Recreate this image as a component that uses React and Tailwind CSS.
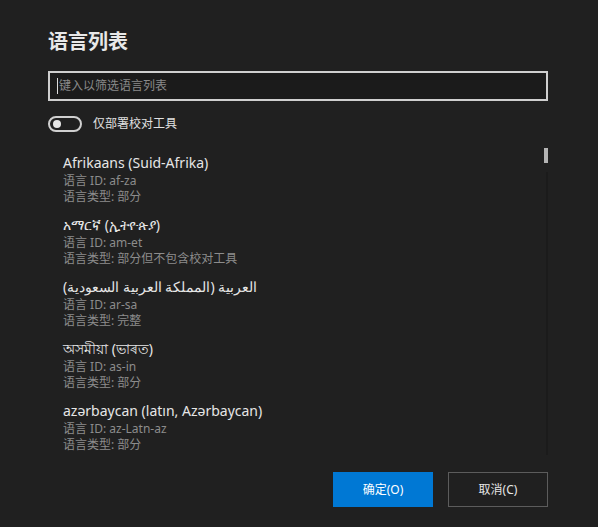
import React from 'react'

/* ── Language list data ─────────────────────────────────────────────── */
const languages = [
  { name: 'Afrikaans (Suid-Afrika)', id: 'af-za', type: '部分' },
  { name: 'አማርኛ (ኢትዮጵያ)', id: 'am-et', type: '部分但不包含校对工具' },
  { name: 'العربية (المملكة العربية السعودية)', id: 'ar-sa', type: '完整', rtl: true },
  { name: 'অসমীয়া (ভাৰত)', id: 'as-in', type: '部分' },
  { name: 'azərbaycan (latın, Azərbaycan)', id: 'az-Latn-az', type: '部分' },
]

/* ── Toggle switch (off) ────────────────────────────────────────────── */
function Toggle() {
  return (
    <div className="w-[34px] h-[16px] rounded-full border-2 border-[#d0d0d0] flex items-center pl-[3px]">
      <div className="w-[8px] h-[8px] rounded-full bg-[#e6e6e6]" />
    </div>
  )
}

/* ── One row of the list ────────────────────────────────────────────── */
function LanguageItem({ name, id, type, rtl }) {
  return (
    <div className="pl-[15px] pb-[10px]">
      <div
        dir={rtl ? 'rtl' : 'ltr'}
        className="text-[14px] leading-[20px] text-[#e6e6e6] w-fit"
      >
        {name}
      </div>
      <div className="text-[12px] leading-[16px] text-[#8c8c8c]">语言 ID: {id}</div>
      <div className="text-[12px] leading-[16px] text-[#8c8c8c]">语言类型: {type}</div>
    </div>
  )
}

export default function App() {
  return (
    <div className="w-[598px] h-[527px] bg-[#202020] pl-[48px] pr-[50px] pt-[28px] flex flex-col font-['Noto_Sans','Noto_Sans_CJK_SC',sans-serif] text-[#e6e6e6]">
      <h1 className="text-[20px] leading-[28px] font-bold text-[#e8e8e8]">语言列表</h1>

      {/* search box */}
      <div className="mt-[15px] h-[30px] border-2 border-[#cfcfcf] bg-[#1b1b1b] flex items-center pl-[7px]">
        <div className="w-px h-[16px] bg-[#dcdcdc] mr-[1px]" />
        <span className="text-[12px] text-[#8a8a8a]">键入以筛选语言列表</span>
      </div>

      {/* proofing-tools toggle */}
      <div className="mt-[15px] flex items-center gap-[11px]">
        <Toggle />
        <span className="text-[12px] leading-[16px] text-[#e0e0e0]">仅部署校对工具</span>
      </div>

      {/* list */}
      <div className="relative mt-[13px] h-[310px] overflow-hidden pt-[8px]">
        {languages.map((l) => (
          <LanguageItem key={l.id} {...l} />
        ))}
        <div className="absolute right-0 top-[27px] bottom-0 w-[2px] bg-[#1b1b1b]" />
        <div className="absolute right-0 top-[3px] w-[4px] h-[15px] bg-[#b4b4b4]" />
      </div>

      {/* buttons */}
      <div className="mt-[17px] flex justify-end gap-[15px]">
        <button className="w-[100px] h-[35px] bg-[#0078d4] text-white text-[12px]">确定(O)</button>
        <button className="w-[100px] h-[35px] border border-[#5c5c5c] text-[#e6e6e6] text-[12px]">取消(C)</button>
      </div>
    </div>
  )
}
